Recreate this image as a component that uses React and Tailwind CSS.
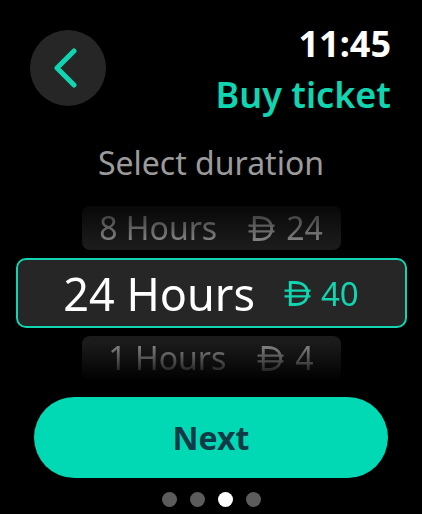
import { useState } from "react";

const durations = [
  { hours: 8, price: 24 },
  { hours: 24, price: 40 },
  { hours: 1, price: 4 },
];

function Dirham({ className }) {
  return (
    <svg viewBox="0 0 28 26" className={className} fill="none" stroke="currentColor" strokeLinecap="butt">
      <path d="M6.5 1.5 V24.5" strokeWidth="3" />
      <path d="M5 1.5 H11 C20 1.5 24.5 6.5 24.5 13 C24.5 19.5 20 24.5 11 24.5 H5" strokeWidth="3" />
      <path d="M0.5 10 H27.5 M0.5 16 H27.5" strokeWidth="2.2" />
    </svg>
  );
}

function PickerRow({ hours, price, selected }) {
  if (selected) {
    return (
      <div className="w-[391px] h-[70px] shrink-0 rounded-[10px] border-2 border-[#10d5b0] bg-[#262626] flex items-center justify-center">
        <span className="text-[45px] leading-none text-white">{hours} Hours</span>
        <span className="ml-[29px] flex items-center text-[#10d5b0]">
          <Dirham className="w-[27px] h-[25px]" />
          <span className="ml-[10px] text-[33px] leading-none">{price}</span>
        </span>
      </div>
    );
  }
  return (
    <div className="w-[259px] h-[44px] shrink-0 rounded-lg bg-[#1b1b1b] flex items-center justify-center text-[#8e8e8e]">
      <span className="text-[32px] leading-none">{hours} Hours</span>
      <span className="ml-[31px] flex items-center">
        <Dirham className="w-[27px] h-[25px]" />
        <span className="ml-[11px] text-[32px] leading-none">{price}</span>
      </span>
    </div>
  );
}

export default function App() {
  const [selected] = useState(1);
  const [page] = useState(2);

  return (
    <div className="w-[422px] h-[514px] bg-black overflow-hidden flex flex-col font-['Noto_Sans',sans-serif]">
      {/* Header */}
      <div className="flex justify-between pt-[30px] pl-[30px] pr-[31px]">
        <button className="w-[76px] h-[76px] rounded-full bg-[#262626] flex items-center justify-center">
          <svg viewBox="0 0 24 40" className="w-[24px] h-[40px] -ml-[6px]" fill="none" stroke="#10d5b0" strokeWidth="5" strokeLinecap="round" strokeLinejoin="round">
            <path d="M21 3 L4 20 L21 37" />
          </svg>
        </button>
        <div className="text-right">
          <div className="text-[36px] leading-none font-bold text-white mt-[-4px]">11:45</div>
          <div className="text-[36px] leading-none font-semibold text-[#10d5b0] mt-[15px]">Buy ticket</div>
        </div>
      </div>

      <div className="text-center text-[32px] leading-none text-[#9b9b9b] mt-[34px]">Select duration</div>

      {/* Duration picker */}
      <div className="mt-[27px] h-[176px] flex flex-col items-center gap-2 overflow-hidden [mask-image:linear-gradient(to_bottom,rgba(0,0,0,0.3)_0px,black_40px,black_136px,transparent_176px)]">
        {durations.map((d, i) => (
          <PickerRow key={d.hours} hours={d.hours} price={d.price} selected={i === selected} />
        ))}
      </div>

      {/* Next button */}
      <div className="px-[34px] mt-[15px]">
        <button className="w-full h-[81px] rounded-full bg-[#00d9b4] text-[#0e3b47] text-[32px] font-bold">
          Next
        </button>
      </div>

      {/* Page dots */}
      <div className="flex justify-center gap-[13px] mt-[14px]">
        {[0, 1, 2, 3].map((i) => (
          <div key={i} className={`w-[15px] h-[15px] rounded-full ${i === page ? "bg-white" : "bg-[#5c5c5c]"}`} />
        ))}
      </div>
    </div>
  );
}
